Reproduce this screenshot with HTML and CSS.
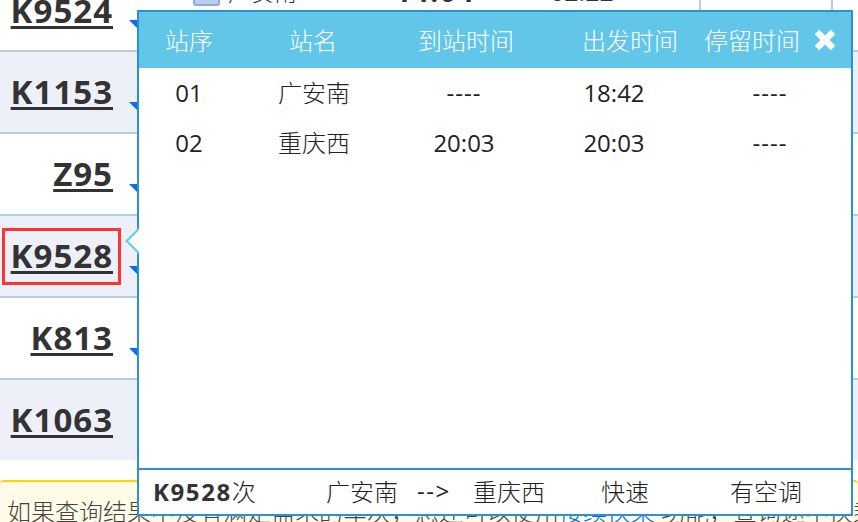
FILE: index.html
```html
<!DOCTYPE html>
<html lang="zh-CN">
<head>
<meta charset="utf-8">
<title>K9528</title>
<link rel="stylesheet" href="styles.css">
</head>
<body>
<div class="page">
  <div class="table">
    <div class="row first"><a class="num">K9524</a><i class="tri"></i>
      <div class="peek"><span class="peek-ico"></span><span class="peek-st">广安南</span><b class="peek-a">14:04</b><span class="peek-b">02:22</span></div>
      <span class="vline v1"></span><span class="vline v2"></span>
    </div>
    <div class="row alt"><a class="num">K1153</a><i class="tri"></i></div>
    <div class="row"><a class="num">Z95</a><i class="tri"></i></div>
    <div class="row alt"><a class="num selected">K9528</a><i class="tri"></i></div>
    <div class="row"><a class="num">K813</a><i class="tri"></i></div>
    <div class="row alt last"><a class="num">K1063</a></div>
  </div>
  <div class="notice">如果查询结果中没有满足需求的车次，您还可以使用<a class="link">接续换乘</a><span class="after">功能，查询途中换乘一次的部分列车余票情况。</span></div>
</div>

<div class="popup">
  <span class="arrow"></span>
  <div class="head">
    <span>站序</span><span>站名</span><span>到站时间</span><span>出发时间</span><span>停留时间</span>
    <svg class="close" width="22" height="22" viewBox="0 0 22 22" aria-hidden="true"><path d="M3 3L19 19M19 3L3 19" stroke="#fff" stroke-width="6.500" fill="none"/></svg>
  </div>
  <div class="body">
    <div class="line"><span class="lat">01</span><span>广安南</span><span class="lat dash">----</span><span class="lat">18:42</span><span class="lat dash">----</span></div>
    <div class="line"><span class="lat">02</span><span>重庆西</span><span class="lat">20:03</span><span class="lat">20:03</span><span class="lat dash">----</span></div>
  </div>
  <div class="foot">
    <span class="f-train"><b>K9528</b>次</span>
    <span class="f-from">广安南</span>
    <span class="f-arrow">--&gt;</span>
    <span class="f-to">重庆西</span>
    <span class="f-type">快速</span>
    <span class="f-air">有空调</span>
  </div>
</div>
</body>
</html>
```
FILE: styles.css
```css
* { box-sizing: border-box; }
html, body { margin: 0; height: 100%; overflow: hidden; background: #fff; }
body {
  font-family: "Open Sans", "Noto Sans CJK SC", sans-serif;
  color: #333;
  position: relative;
  width: 858px;
  height: 522px;
}
.page { display: flex; flex-direction: column; height: 522px; overflow: hidden; }
.table { display: flex; flex-direction: column; }
.row {
  position: relative;
  height: 82px;
  border-bottom: 2px solid #b3cfe0;
  display: flex;
  align-items: center;
  justify-content: flex-end;
  width: 858px;
  padding-right: 745px;
}
.row.first { height: 52px; align-items: flex-end; padding-bottom: 20px; }
.row.alt { background: #edf0f8; }
.row.last { border-bottom: 0; height: 80px; }
.num {
  font-size: 33px;
  line-height: 38px;
  font-weight: 700;
  letter-spacing: 1px;
  color: #333;
  text-decoration: underline;
  text-decoration-thickness: 3px;
  text-underline-offset: 3px;
  white-space: nowrap;
}
.selected {
  border: 3px solid #ff3333;
  width: 119px;
  height: 57px;
  margin-right: -8px;
  padding-right: 5px;
  display: flex;
  align-items: center;
  justify-content: flex-end;
}
.tri {
  position: absolute;
  left: 129px;
  top: 50px;
  width: 0;
  height: 0;
  border-top: 9px solid #0a6fe0;
  border-left: 9px solid transparent;
}
.row.first .tri { top: 20px; }
.peek { position: absolute; left: 193px; top: -23px; height: 28px; display: flex; align-items: center; font-size: 23px; font-weight: 300; }
.peek-ico { width: 27px; height: 29px; background: #bccdee; border: 2px solid #8fa9dc; border-radius: 3px; margin-right: 8px; flex: none; }
.peek-st { width: 167px; }
.peek-a { width: 155px; font-size: 28px; letter-spacing: 1.6px; font-weight: 700; }
.peek-b { font-size: 25px; font-weight: 400; }
.vline { position: absolute; top: 0; height: 52px; width: 2px; background: #b3cfe0; }
.v1 { left: 699px; }
.v2 { left: 831px; }
.notice {
  margin-top: 20px;
  height: 42px;
  background: #fffbe6;
  border-top: 2px solid #ffd400;
  border-radius: 4px 4px 0 0;
  padding: 14px 7px 0;
  font-size: 24px;
  font-weight: 300;
  line-height: 32px;
  color: #444;
  white-space: nowrap;
  overflow: hidden;
}
.link { color: #0066e0; }
.after { margin-left: 6px; }

.popup {
  position: absolute;
  left: 137px;
  top: 10px;
  width: 716px;
  height: 506px;
  border: 2px solid #2c90d6;
  background: #fff;
  display: flex;
  flex-direction: column;
  font-size: 24px;
  font-weight: 300;
}
.arrow {
  position: absolute;
  left: -10px;
  top: 220px;
  width: 18px;
  height: 18px;
  background: #fff;
  border-left: 2px solid #62cbe4;
  border-bottom: 2px solid #62cbe4;
  transform: rotate(45deg);
}
.head {
  display: grid;
  grid-template-columns: 124px 129px 164px 122px 110px 22px;
  align-items: center;
  height: 56px;
  padding: 0 0 1px 26px;
  background: #62c6e8;
  color: #fff;
  flex: none;
}
.close { display: block; }
.body { flex: 1; }
.line {
  display: grid;
  grid-template-columns: 100px 150px 150px 150px 162px;
  text-align: center;
  height: 50px;
  line-height: 50px;
  color: #222;
}
.lat { font-weight: 400; }
.dash { letter-spacing: 1px; }
.foot {
  height: 46px;
  flex: none;
  border-top: 2px solid #2c90d6;
  padding-bottom: 3px;
  display: flex;
  align-items: center;
  color: #222;
  white-space: nowrap;
}
.foot b { font-weight: 700; letter-spacing: 1.6px; color: #333; }
.f-train { width: 187px; padding-left: 14px; }
.f-from { width: 91px; }
.f-arrow { width: 56px; font-weight: 400; letter-spacing: 1.5px; }
.f-to { width: 128px; }
.f-type { width: 129px; }
```
